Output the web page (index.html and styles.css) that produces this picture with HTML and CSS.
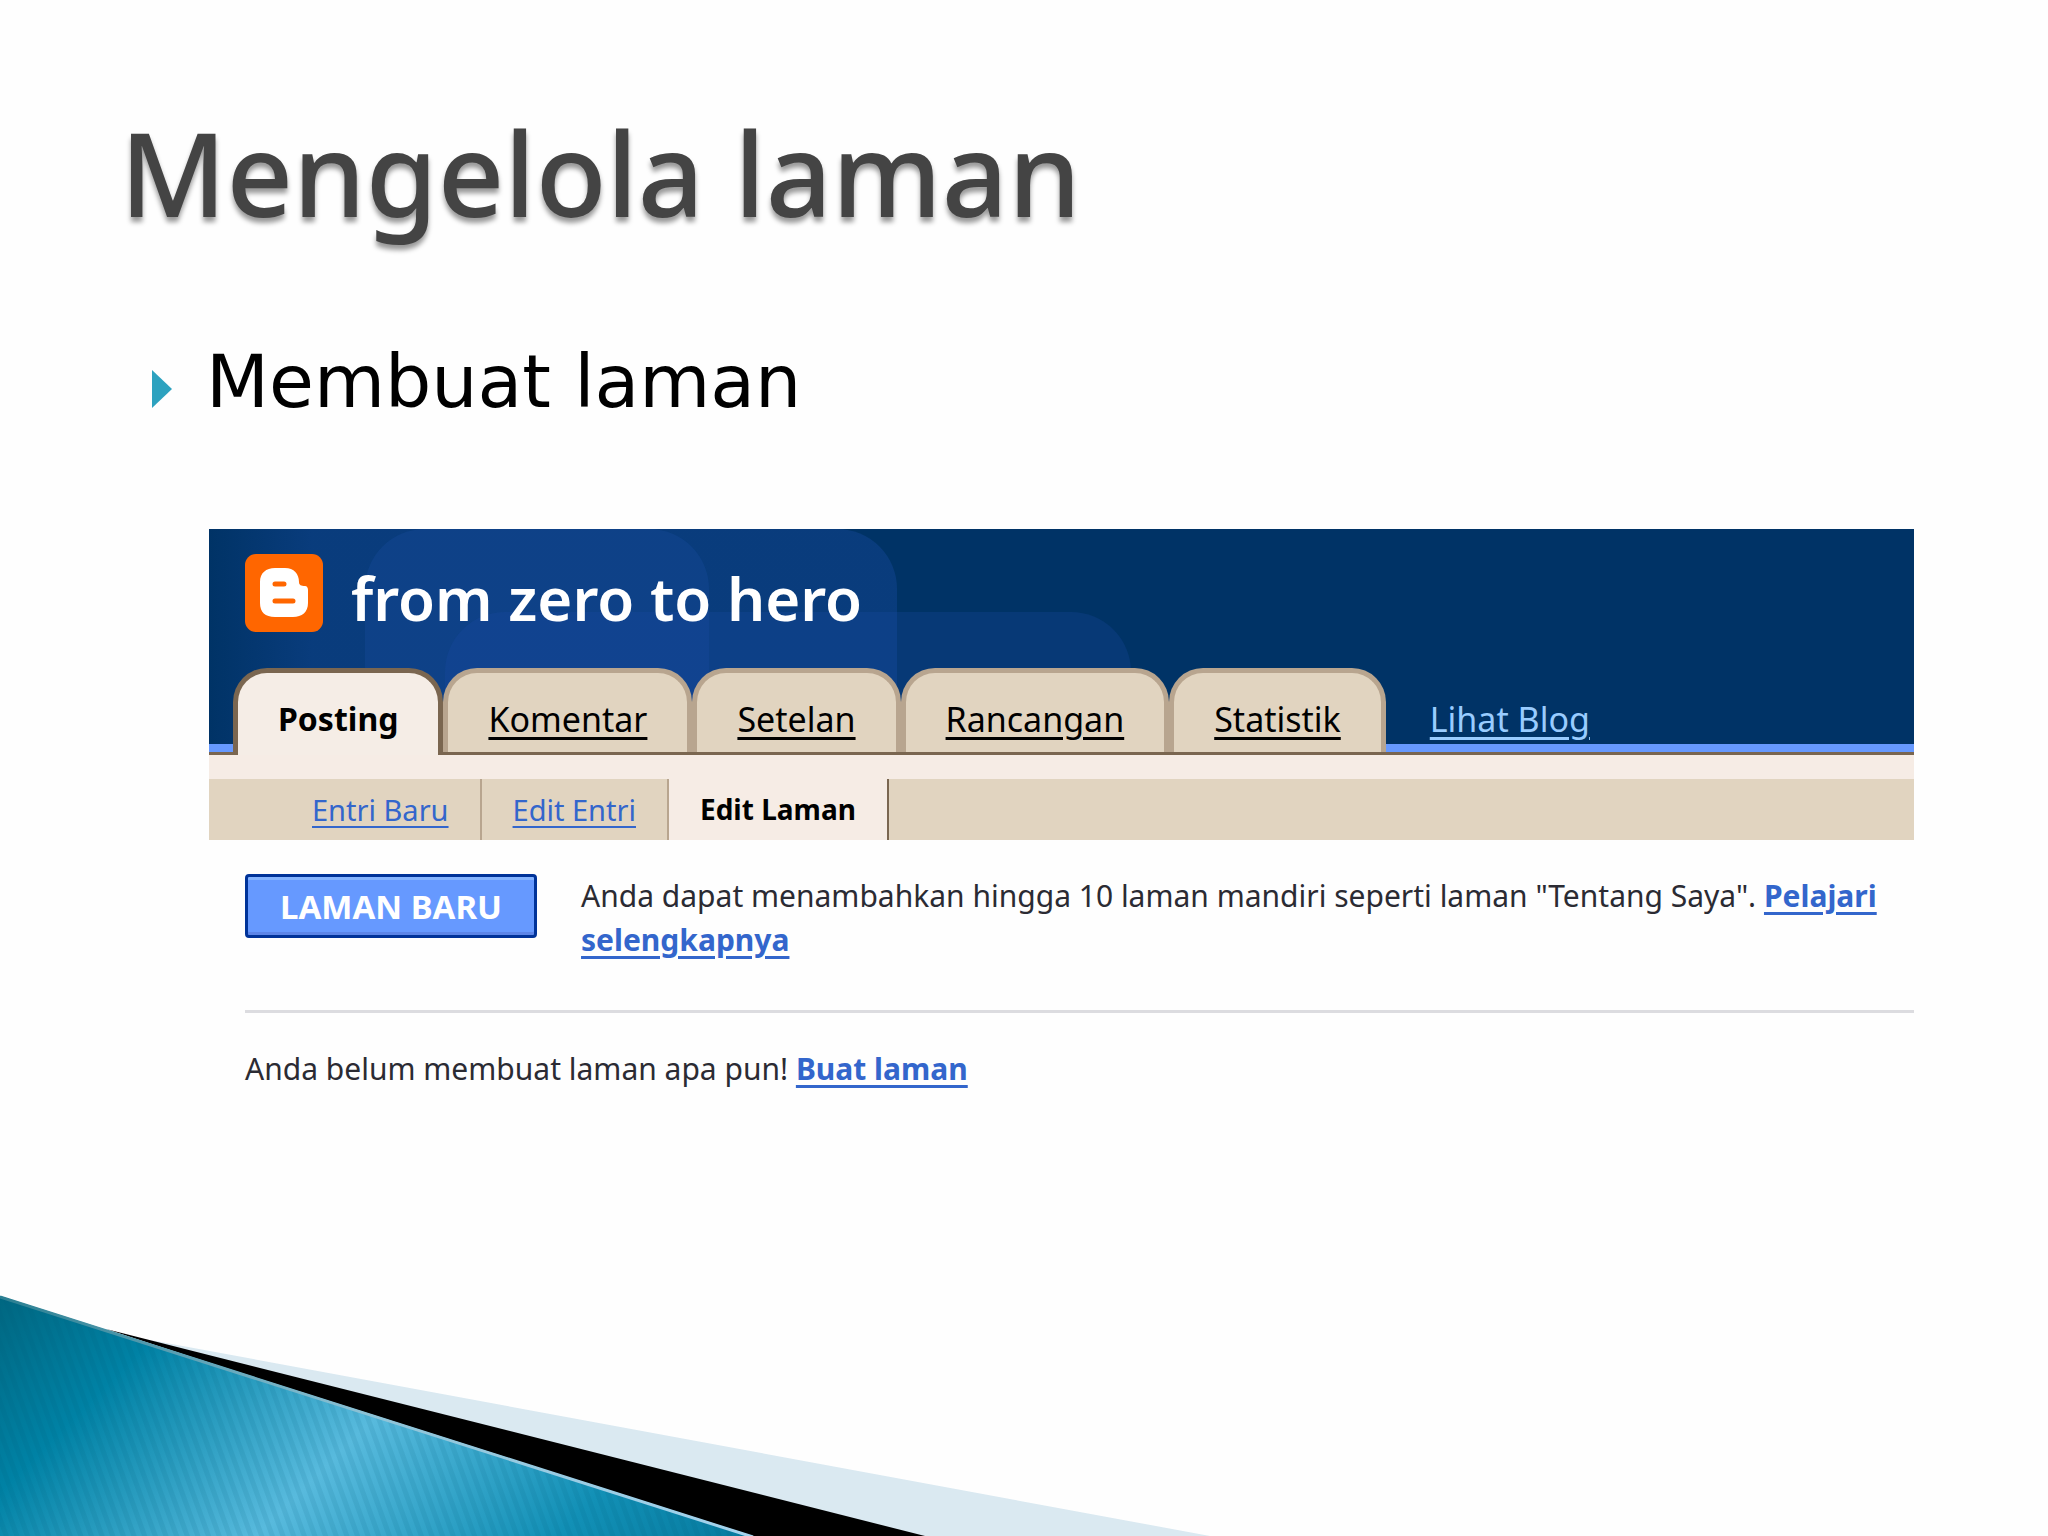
FILE: index.html
```html
<!DOCTYPE html>
<html lang="id">
<head>
<meta charset="UTF-8">
<meta name="viewport" content="width=device-width, initial-scale=1.0">
<title>Mengelola laman</title>
<link rel="stylesheet" href="styles.css">
</head>
<body>

<main class="slide">
<h1>Mengelola laman</h1>
<ul class="points">
<li>
<svg class="bullet" viewBox="0 0 20 38" aria-hidden="true"><path d="M0 0 L20 19 L0 38 Z" fill="#2da2bf"/></svg>
Membuat laman
</li>
</ul>

<section class="blogger">
<header class="header">
<svg class="shapes" viewBox="0 0 930 223" aria-hidden="true">
<defs>
<linearGradient id="fade" x1="0" x2="1">
<stop offset="0" stop-color="#1a4da6" stop-opacity="0"/>
<stop offset="0.15" stop-color="#1a4da6" stop-opacity="0.35"/>
<stop offset="1" stop-color="#1a4da6" stop-opacity="0.35"/>
</linearGradient>
</defs>
<path d="M0 0 H628 A60 60 0 0 1 688 60 V223 H0 Z" fill="url(#fade)"/>
<path d="M156 223 V60 A60 60 0 0 1 216 0 H440 A60 60 0 0 1 500 60 V223 Z" fill="#1f55b0" fill-opacity="0.22"/>
<path d="M236 223 V143 A60 60 0 0 1 296 83 H862 A60 60 0 0 1 922 143 V223 Z" fill="#1a4da6" fill-opacity="0.25"/>
</svg>
<div class="brand">
<svg class="logo" viewBox="0 0 78 78" aria-hidden="true">
<rect width="78" height="78" rx="11" fill="#ff6600"/>
<path d="M30 14 H40 C49 14 54 20 54 28 C54 31 56 32 60 32 C62 32 63 34 63 36 V49 C63 58 57 63 48 63 H30 C20 63 15 58 15 49 V28 C15 19 21 14 30 14 Z" fill="#fff"/>
<path d="M30 30 H39 M30 47 H48" stroke="#ff6600" stroke-width="5" stroke-linecap="round"/>
</svg>
<h2>from zero to hero</h2>
</div>
<nav class="tabs">
<a class="tab active" href="#">Posting</a>
<a class="tab" href="#">Komentar</a>
<a class="tab" href="#">Setelan</a>
<a class="tab" href="#">Rancangan</a>
<a class="tab" href="#">Statistik</a>
<a class="view" href="#">Lihat Blog</a>
</nav>
</header>
<nav class="subnav">
<a href="#">Entri Baru</a>
<a href="#">Edit Entri</a>
<a class="active" href="#">Edit Laman</a>
</nav>
<div class="content">
<div class="intro">
<button type="button">LAMAN BARU</button>
<p>Anda dapat menambahkan hingga 10 laman mandiri seperti laman "Tentang Saya". <a href="#">Pelajari selengkapnya</a></p>
</div>
<p class="empty">Anda belum membuat laman apa pun! <a href="#">Buat laman</a></p>
</div>
</section>

<svg class="swoosh" viewBox="0 0 2048 244" aria-hidden="true">
<defs>
<linearGradient id="teal" gradientUnits="userSpaceOnUse" x1="0" y1="0" x2="500" y2="500">
<stop offset="0" stop-color="#006680"/>
<stop offset="0.2" stop-color="#0082a5"/>
<stop offset="0.5" stop-color="#58badd"/>
<stop offset="0.8" stop-color="#1290b6"/>
<stop offset="1" stop-color="#067a9e"/>
</linearGradient>
<linearGradient id="edge" x1="0" x2="1">
<stop offset="0" stop-color="#2b7f92"/>
<stop offset="0.5" stop-color="#8fc4d8"/>
<stop offset="1" stop-color="#a5d4ee"/>
</linearGradient>
<pattern id="stripes" width="10" height="10" patternUnits="userSpaceOnUse" patternTransform="rotate(-20)">
<rect width="5" height="10" fill="#005a7a" fill-opacity="0.1"/>
</pattern>
</defs>
<path d="M150 48 L1210 244 H700 Z" fill="#dae9f1"/>
<path d="M106 37 L925 244 H740 Z" fill="#000"/>
<path d="M0 4 L753 244 H0 Z" fill="url(#teal)"/>
<path d="M0 4 L753 244 H0 Z" fill="url(#stripes)"/>
<path d="M0 5 L753 245" stroke="url(#edge)" stroke-width="3"/>
</svg>
</main>

</body>
</html>
```

FILE: styles.css
```css
body {
    font-family: "Noto Sans", "Open Sans", sans-serif;
    background-color: #fefefe;
    color: #000;
    margin: 0;
}

.slide {
    display: flex;
    flex-direction: column;
    min-height: 100vh;
}

h1 {
    margin: 88px 120px 0;
    font-size: 116px;
    line-height: 168px;
    font-weight: 500;
    color: #444;
    text-shadow: 0 5px 5px rgba(0, 0, 0, 0.4);
}

.points {
    list-style: none;
    margin: 72px 152px 0;
    padding: 0;
    font-family: "DejaVu Sans", sans-serif;
    font-size: 73px;
    line-height: 108px;
}

.points li {
    display: flex;
    align-items: center;
    gap: 34px;
}

.bullet {
    width: 20px;
    height: 38px;
    margin-top: 14px;
}

.blogger {
    margin: 93px 134px 0 209px;
    font-size: 30px;
}

.header {
    position: relative;
    background-color: #003366;
}

.shapes {
    position: absolute;
    left: 0;
    top: 0;
    height: 223px;
}

.brand {
    position: relative;
    display: flex;
    align-items: flex-start;
    gap: 28px;
    padding: 25px 36px 26px;
}

.logo {
    width: 78px;
    height: 78px;
}

h2 {
    margin: 0;
    font-size: 60px;
    line-height: 88px;
    font-weight: 600;
    color: #fff;
}

.tabs {
    position: relative;
    display: flex;
    padding-left: 24px;
    font-size: 34px;
    line-height: 50px;
    border-bottom: 3px solid #7a6650;
    background: linear-gradient(#6699ff, #6699ff) bottom / 100% 8px no-repeat;
}

.tab {
    padding: 21px 40px 8px;
    color: #000;
    background-color: #e1d4c0;
    border: 5px solid #b8a58f;
    border-bottom: 0;
    border-radius: 34px 34px 0 0;
    text-underline-offset: 5px;
}

.tab.active {
    margin-bottom: -3px;
    background-color: #f5ede6;
    border-color: #7a6650;
    font-size: 32px;
    font-weight: bold;
    text-decoration: none;
}

.view {
    padding: 26px 44px 8px;
    color: #99ccff;
    text-underline-offset: 5px;
}

.subnav {
    display: flex;
    padding-left: 72px;
    line-height: 61px;
    font-size: 29px;
    background-color: #e1d4c0;
    border-top: 24px solid #f6ece5;
}

.subnav a {
    padding: 0 31px;
    color: #3366cc;
    border-right: 2px solid #b8a58f;
    text-underline-offset: 5px;
}

.subnav .active {
    color: #000;
    font-size: 28px;
    font-weight: bold;
    text-decoration: none;
    background-color: #f6ece5;
    border-color: #7a6650;
}

.content {
    padding: 34px 0 0 36px;
    line-height: 44px;
    color: #2b2b33;
}

.content a {
    color: #3366cc;
    font-weight: bold;
    text-underline-offset: 5px;
}

.intro {
    display: flex;
    align-items: flex-start;
    gap: 44px;
    padding-bottom: 48px;
    border-bottom: 3px solid #dcdce0;
}

.intro p {
    flex: 1;
    margin: 0;
}

button {
    height: 64px;
    padding: 0 32px;
    font-family: inherit;
    font-size: 33px;
    font-weight: bold;
    color: #fff;
    background-color: #6699ff;
    border: 3px solid #003399;
    border-radius: 4px;
    box-shadow: inset 0 3px #85b4ff, inset 0 -3px #5c85e8;
    white-space: nowrap;
    cursor: pointer;
}

.empty {
    margin: 34px 0;
}

.swoosh {
    display: block;
    width: 100%;
    margin-top: auto;
}
```
